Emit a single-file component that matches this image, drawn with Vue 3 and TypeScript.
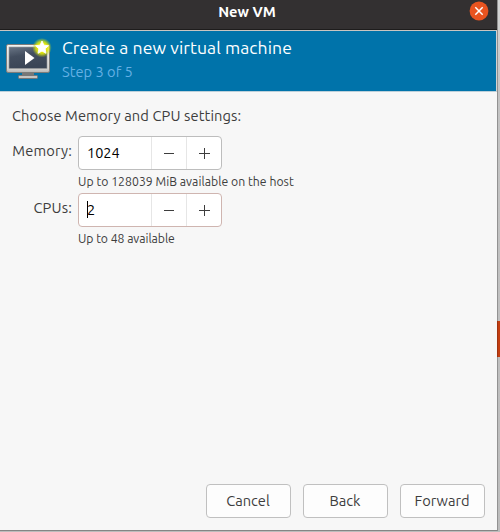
<script setup lang="ts">
import { ref } from 'vue'

interface Field {
  id: string
  label: string
  value: number
  hint: string
  focused: boolean
}

const fields = ref<Field[]>([
  { id: 'memory', label: 'Memory:', value: 1024, hint: 'Up to 128039 MiB available on the host', focused: false },
  { id: 'cpus', label: 'CPUs:', value: 2, hint: 'Up to 48 available', focused: true },
])

const actions: string[] = ['Cancel', 'Back', 'Forward']

function step(field: Field, delta: number): void {
  field.value = Math.max(1, field.value + delta)
}
</script>

<template>
  <div class="desktop">
    <div class="window">
      <header class="titlebar">
        <span class="caption">New VM</span>
        <button class="close" aria-label="Close">
          <svg width="20" height="20" viewBox="0 0 20 20">
            <circle cx="10" cy="10" r="9.4" fill="#e95420" />
            <path d="M6.3 6.3l7.4 7.4M13.7 6.3l-7.4 7.4" stroke="#fff" stroke-width="1.5" />
          </svg>
        </button>
      </header>

      <section class="banner">
        <svg class="logo" width="52" height="48" viewBox="0 0 52 48">
          <defs>
            <linearGradient id="frame" x1="0" y1="0" x2="0" y2="1">
              <stop offset="0" stop-color="#f4f4f2" />
              <stop offset="0.85" stop-color="#d6d6d4" />
              <stop offset="1" stop-color="#b5b5b3" />
            </linearGradient>
            <linearGradient id="screen" x1="0" y1="0" x2="0.3" y2="1">
              <stop offset="0" stop-color="#6a7686" />
              <stop offset="0.45" stop-color="#434e5f" />
              <stop offset="1" stop-color="#3a4556" />
            </linearGradient>
            <radialGradient id="glow">
              <stop offset="0.4" stop-color="#f4f400" />
              <stop offset="0.65" stop-color="#dfe80a" stop-opacity="0.8" />
              <stop offset="1" stop-color="#b8d020" stop-opacity="0" />
            </radialGradient>
          </defs>
          <path d="M22 37h12v5H22z" fill="#777" />
          <rect x="18.5" y="40.5" width="19" height="3" rx="0.8" fill="#c4c4c2" stroke="#777" />
          <rect x="6.5" y="9.5" width="43" height="28" rx="1.6" fill="url(#frame)" stroke="#7c7c7a" />
          <rect x="9" y="12" width="38" height="21.5" fill="url(#screen)" stroke="#9a9b9c" stroke-width="0.6" />
          <path d="M25 16v14l9.5-7z" fill="#fff" />
          <circle cx="42" cy="12.7" r="9.8" fill="url(#glow)" />
          <path d="M42 6l1.9 4.2 4.6.5-3.4 3.1.9 4.5-4-2.3-4 2.3.9-4.5-3.4-3.1 4.6-.5z" fill="#fff" stroke="#fff" stroke-width="0.9" />
        </svg>
        <div class="heading">
          <h1>Create a new virtual machine</h1>
          <p>Step 3 of 5</p>
        </div>
      </section>

      <main class="content">
        <p class="prompt">Choose Memory and CPU settings:</p>
        <div v-for="field in fields" :key="field.id" class="row">
          <label class="label" :class="field.id">{{ field.label }}</label>
          <div class="control">
            <div class="spin" :class="{ focused: field.focused }">
              <div class="value">
                <i v-if="field.focused" class="caret"></i><span>{{ field.value }}</span>
              </div>
              <button class="minus" aria-label="Decrease" @click="step(field, -1)">
                <svg width="11" height="11" viewBox="0 0 11 11"><path d="M0 5.5h10" stroke="#3d3d3d" /></svg>
              </button>
              <button class="plus" aria-label="Increase" @click="step(field, 1)">
                <svg width="11" height="11" viewBox="0 0 11 11"><path d="M0 5.5h11M5.5 0v11" stroke="#3d3d3d" /></svg>
              </button>
            </div>
            <p class="hint" :class="field.id">{{ field.hint }}</p>
          </div>
        </div>
      </main>

      <footer class="actions">
        <button v-for="action in actions" :key="action" class="action" :class="action.toLowerCase()">{{ action }}</button>
      </footer>
    </div>
    <div class="edge"></div>
  </div>
</template>

<style>
body {
  margin: 0;
  overflow: hidden;
}
</style>

<style scoped>
* {
  box-sizing: border-box;
}
.desktop {
  display: flex;
  width: 500px;
  height: 532px;
  background: linear-gradient(#d6d6d6, #c4c4c4 90px, #bcbcbc);
  font-family: Ubuntu, "Noto Sans", sans-serif;
  font-size: 14.67px;
  color: #3d3d3d;
}
.window {
  width: 498px;
  height: 531px;
  display: flex;
  flex-direction: column;
  background: #f7f7f7;
  border-right: 1px solid #929292;
  border-bottom: 1px solid #858585;
}
.edge {
  width: 3px;
  height: 36px;
  margin: 321px 0 0 -1px;
  background: linear-gradient(90deg, #9e3210 1px, #c33e10 1px);
}
h1, p {
  margin: 0;
  font-weight: normal;
  white-space: nowrap;
}
button {
  padding: 0;
  border: 0;
  background: none;
  font: inherit;
  color: inherit;
}
svg {
  display: block;
}
.titlebar {
  flex: none;
  height: 30px;
  display: grid;
  grid-template-columns: 27px 1fr 30px;
  background: #333031;
  border-bottom: 1px solid #1e1c1c;
}
.caption {
  grid-column: 2;
  text-align: center;
  line-height: 24px;
  font-weight: bold;
  color: #fff;
}
.close {
  width: 20px;
  height: 20px;
  margin: 1px 0 0 2px;
}
.banner {
  flex: none;
  height: 62px;
  display: flex;
  background: #0073aa;
  border-top: 1px solid #c9c5c1;
  border-bottom: 1px solid #bcd0da;
  border-right: 1px solid #d3d3d3;
}
.logo {
  margin-top: 4px;
}
.heading {
  padding: 4px 0 0 10px;
}
.heading h1 {
  font-size: 17.6px;
  letter-spacing: 0.07px;
  line-height: 26px;
  color: #fff;
}
.heading p {
  font-size: 14.67px;
  line-height: 22px;
  color: #64b0e4;
}
.content {
  flex: 1;
  padding: 14px 12px 0;
}
.prompt {
  height: 30px;
  line-height: 20px;
  letter-spacing: 0.11px;
}
.row {
  display: flex;
  height: 57px;
}
.label {
  width: 60px;
  margin-right: 6px;
  display: flex;
  justify-content: flex-end;
  line-height: 30px;
  letter-spacing: 0.16px;
  white-space: nowrap;
}
.spin {
  display: flex;
  width: 144px;
  height: 34px;
  border: 1px solid #bdbdbd;
  border-radius: 4px;
  background: #fff;
}
.spin.focused {
  border-color: #cfb5b0;
}
.value {
  position: relative;
  width: 72px;
  padding-left: 8px;
  line-height: 32px;
  font-size: 14.5px;
  color: #000;
}
.caret {
  position: absolute;
  left: 8px;
  top: 7px;
  width: 1px;
  height: 17px;
  background: #000;
}
.minus, .plus {
  width: 35px;
  border-left: 1px solid #e6e6e6;
  display: flex;
  align-items: center;
  justify-content: center;
}
.hint {
  font-size: 12.22px;
  letter-spacing: 0.03px;
  line-height: 23px;
}
.hint.cpus {
  letter-spacing: -0.05px;
}
.actions {
  display: flex;
  justify-content: flex-end;
  gap: 12px;
  padding: 0 12px 12px 0;
}
.action {
  width: 85px;
  height: 34px;
  padding-right: 1px;
  border: 1px solid #c0c0c0;
  border-radius: 4px;
  background: #fdfdfd;
  line-height: 32px;
}
</style>
